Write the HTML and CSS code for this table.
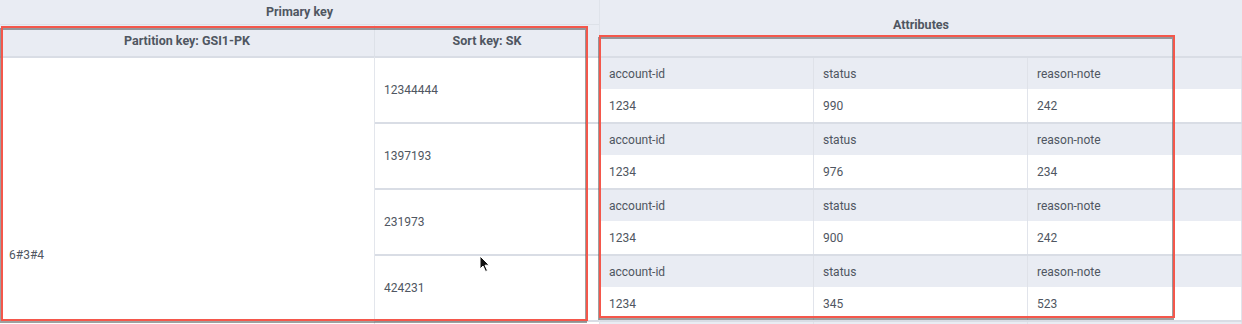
FILE: index.html
```html
<!DOCTYPE html>
<html>
<head>
<meta charset="utf-8">
<link rel="stylesheet" href="styles.css">
</head>
<body>
<div class="page">
  <div class="table">
    <section class="pk">
      <div class="pk-title">Primary key</div>
      <div class="pk-sub">
        <div class="sub-part">Partition key: GSI1-PK</div>
        <div class="sub-sort">Sort key: SK</div>
      </div>
      <div class="pk-body">
        <div class="part-cell"><span class="part-text">6#3#4</span></div>
        <div class="sort-col">
          <div class="sort-cell">12344444</div>
          <div class="sort-cell">1397193</div>
          <div class="sort-cell">231973</div>
          <div class="sort-cell">424231</div>
          <div class="sort-cell"></div>
        </div>
      </div>
    </section>
    <section class="attrs">
      <div class="attr-title">Attributes</div>
      <div class="item">
        <div class="row head"><div class="cell">account-id</div><div class="cell">status</div><div class="cell">reason-note</div></div>
        <div class="row val"><div class="cell">1234</div><div class="cell">990</div><div class="cell">242</div></div>
      </div>
      <div class="item">
        <div class="row head"><div class="cell">account-id</div><div class="cell">status</div><div class="cell">reason-note</div></div>
        <div class="row val"><div class="cell">1234</div><div class="cell">976</div><div class="cell">234</div></div>
      </div>
      <div class="item">
        <div class="row head"><div class="cell">account-id</div><div class="cell">status</div><div class="cell">reason-note</div></div>
        <div class="row val"><div class="cell">1234</div><div class="cell">900</div><div class="cell">242</div></div>
      </div>
      <div class="item">
        <div class="row head"><div class="cell">account-id</div><div class="cell">status</div><div class="cell">reason-note</div></div>
        <div class="row val"><div class="cell">1234</div><div class="cell">345</div><div class="cell">523</div></div>
      </div>
      <div class="item">
        <div class="row head"><div class="cell"></div><div class="cell"></div><div class="cell"></div></div>
      </div>
    </section>
  </div>

  <div class="mark mark-pk"></div>
  <div class="mark mark-attr"></div>

  <svg class="cursor" width="12" height="18" viewBox="0 0 12 18">
    <path d="M1 1 L1 14 L4 11 L6.5 16.5 L8.5 15.6 L6 10.2 L10.2 10.2 Z" fill="#111" stroke="#fff" stroke-width="1" stroke-linejoin="round"/>
  </svg>
</div>
</body>
</html>
```

FILE: styles.css
```css
html, body {
  margin: 0;
  padding: 0;
  overflow: hidden;
  background: #ffffff;
}

.page {
  position: relative;
  width: 1242px;
  height: 324px;
  overflow: hidden;
  font-family: Roboto, "Liberation Sans", sans-serif;
  font-size: 12px;
  line-height: 16px;
  color: #4f5661;
}

.table {
  display: grid;
  grid-template-columns: 600px 642px;
}

/* Primary key side */
.pk {
  display: flex;
  flex-direction: column;
  border-right: 1px solid #dfe3ea;
}

.pk-title {
  height: 24px;
  background: #e9ecf3;
  border-bottom: 1px solid #dde1e8;
  display: flex;
  align-items: center;
  justify-content: center;
  font-weight: 700;
  font-size: 12.5px;
}

.pk-sub {
  display: grid;
  grid-template-columns: 375px 1fr;
  height: 31px;
  background: #e9ecf3;
  font-weight: 700;
  font-size: 12.5px;
}

.sub-part,
.sub-sort {
  display: flex;
  align-items: center;
  justify-content: center;
  padding-top: 1px;
}

.sub-part {
  border-right: 1px solid #dde1e8;
}

.pk-body {
  display: grid;
  grid-template-columns: 375px 1fr;
}

.part-cell {
  border-top: 2px solid #d9dde5;
  border-right: 1px solid #e3e6ec;
  padding: 189px 0 0 9px;
}

.sort-col {
  display: flex;
  flex-direction: column;
}

.sort-cell {
  height: 64px;
  border-top: 2px solid #d9dde5;
  display: flex;
  align-items: center;
  padding-left: 9px;
}

/* Attributes side */
.attrs {
  display: flex;
  flex-direction: column;
}

.attr-title {
  height: 56px;
  background: #e9ecf3;
  font-weight: 700;
  font-size: 12.5px;
  text-align: center;
  padding-top: 17px;
  box-sizing: border-box;
}

.item {
  border-top: 2px solid #d9dde5;
}

.row {
  display: grid;
  grid-template-columns: 214px 214px 214px;
}

.row.head {
  height: 31px;
  background: #e9ecf3;
}

.row.val {
  height: 33px;
  background: #ffffff;
}

.cell {
  display: flex;
  align-items: center;
  padding-left: 9px;
  border-right: 1px solid #e1e4eb;
}

.row.head .cell {
  border-right-color: #dfe2e9;
}

/* Annotation rectangles over the table */
.mark {
  position: absolute;
}

.mark::before {
  content: "";
  position: absolute;
  left: -1px;
  top: 2px;
  right: 1px;
  bottom: -2px;
  border: 2px solid rgba(80, 80, 80, 0.55);
}

.mark::after {
  content: "";
  position: absolute;
  inset: 0;
  border: 2px solid #f4574b;
}

.mark-pk {
  left: 1px;
  top: 26px;
  width: 587px;
  height: 295px;
}

.mark-attr {
  left: 599px;
  top: 35px;
  width: 576px;
  height: 283px;
}

.cursor {
  position: absolute;
  left: 479px;
  top: 255px;
}
```
